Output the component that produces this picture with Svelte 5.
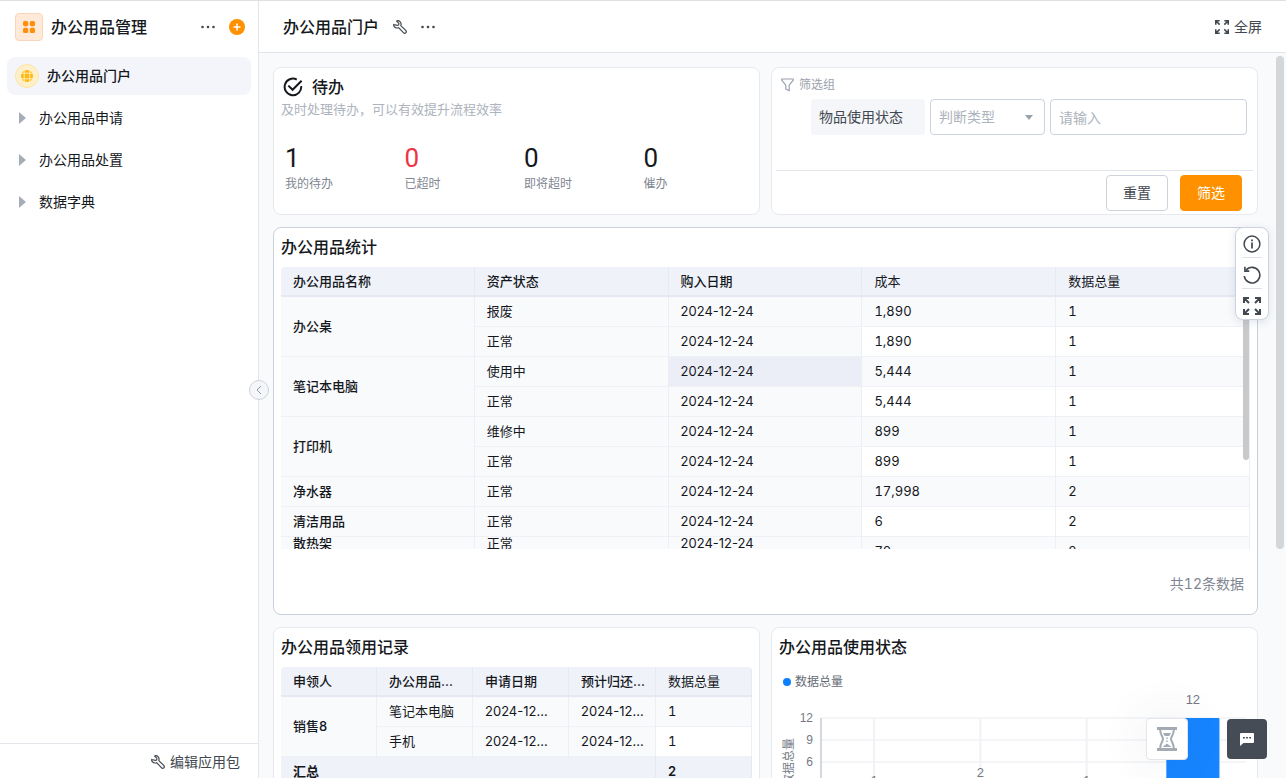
<script>
	let menus = ['办公用品申请', '办公用品处置', '数据字典'];

	let stats = [
		{ label: '我的待办', value: 1 },
		{ label: '已超时', value: 0, danger: true },
		{ label: '即将超时', value: 0 },
		{ label: '催办', value: 0 }
	];

	let keyword = $state('');
	let judge = $state('');

	// span = how many rows the name cell covers, 0 when a cell above covers it
	let rows = [
		{ name: '办公桌', span: 2, state: '报废', date: '2024-12-24', cost: '1,890', total: 1 },
		{ span: 0, state: '正常', date: '2024-12-24', cost: '1,890', total: 1 },
		{ name: '笔记本电脑', span: 2, state: '使用中', date: '2024-12-24', cost: '5,444', total: 1, active: true },
		{ span: 0, state: '正常', date: '2024-12-24', cost: '5,444', total: 1 },
		{ name: '打印机', span: 2, state: '维修中', date: '2024-12-24', cost: '899', total: 1 },
		{ span: 0, state: '正常', date: '2024-12-24', cost: '899', total: 1 },
		{ name: '净水器', span: 1, state: '正常', date: '2024-12-24', cost: '17,998', total: 2 },
		{ name: '清洁用品', span: 1, state: '正常', date: '2024-12-24', cost: '6', total: 2 },
		{ name: '散热架', span: 1, state: '正常', date: '2024-12-24', cost: '70', total: 2, stuck: true }
	];

	// chart
	let chartWidth = $state(471);
	const left = 42;
	const top = 21;
	const unit = 22;
	const values = [1, 2, 1, 12];
	const ticks = [12, 9, 6, 3, 0];
	let step = $derived((chartWidth - left - 4) / values.length);
	const barTop = (v) => top + ((12 - v) / 3) * unit;
</script>

{#snippet wrench()}
	<svg width="14" height="14" viewBox="0 0 14 14" fill="none" stroke="#42484f" stroke-width="1.2" stroke-linejoin="round" stroke-linecap="round">
		<path d="M3.6 1.1 5.9 3.4 5.7 5 4.2 5.4 1 4.5C.4 4.3.5 5.5 1.3 6.6 2.2 7.8 3.9 8.3 5.6 7.7L10.4 12.7C11.1 13.4 12.2 13.4 12.8 12.8 13.4 12.2 13.4 11.1 12.7 10.4L7.8 5.6C8.4 3.7 7.8 2.1 6.6 1.2 5.5.5 4.3.4 3.6 1.1Z" />
	</svg>
{/snippet}

{#snippet dots()}
	<svg width="14" height="4" viewBox="0 0 14 4" fill="#42484f">
		<circle cx="1.5" cy="2" r="1.3" /><circle cx="7" cy="2" r="1.3" /><circle cx="12.5" cy="2" r="1.3" />
	</svg>
{/snippet}

{#snippet expand(size)}
	<svg width={size} height={size} viewBox="0 0 18 18" fill="none" stroke="#42484f" stroke-width="2">
		<path d="M1 6V1H6M1 1 6 6M12 1H17V6M17 1 12 6M1 12V17H6M1 17 6 12M12 17H17V12M17 17 12 12" />
	</svg>
{/snippet}

<div class="page">
	<aside>
		<div class="app-head">
			<span class="app-icon">
				<svg width="12" height="12" viewBox="0 0 12 12" fill="#ff8f0a">
					<rect width="5.2" height="5.2" rx="1.6" /><rect x="6.8" width="5.2" height="5.2" rx="1.6" />
					<rect y="6.8" width="5.2" height="5.2" rx="1.6" /><rect x="6.8" y="6.8" width="5.2" height="5.2" rx="1.6" />
				</svg>
			</span>
			<h1>办公用品管理</h1>
			<button class="plain more" aria-label="更多">{@render dots()}</button>
			<button class="plain" aria-label="新建">
				<svg width="16" height="16" viewBox="0 0 16 16">
					<circle cx="8" cy="8" r="8" fill="#ff9100" />
					<path d="M8 4.5V11.5M4.5 8H11.5" stroke="#fff" stroke-width="1.5" />
				</svg>
			</button>
		</div>
		<nav>
			<a class="menu current" href="#portal">
				<span class="globe">
					<svg width="12" height="12" viewBox="0 0 12 12">
						<circle cx="6" cy="6" r="6" fill="#fcb813" />
						<g fill="none" stroke="#fff0bf" stroke-width=".9">
							<path d="M3.2 0V12M8.8 0V12M0 3.2H12M0 8.8H12" />
						</g>
					</svg>
				</span>
				办公用品门户
			</a>
			{#each menus as menu}
				<a class="menu" href="#menu">
					<svg width="7" height="12" viewBox="0 0 7 12"><path d="M0 0 7 6 0 12Z" fill="#a5adb7" /></svg>
					{menu}
				</a>
			{/each}
		</nav>
		<button class="plain edit">{@render wrench()}编辑应用包</button>
		<button class="fold" aria-label="收起">
			<svg width="6" height="10" viewBox="0 0 6 10" fill="none" stroke="#8f97a3"><path d="M5 1 1 5 5 9" /></svg>
		</button>
	</aside>

	<main>
		<header>
			<h1>办公用品门户</h1>
			<button class="plain" aria-label="设置">{@render wrench()}</button>
			<button class="plain" aria-label="更多">{@render dots()}</button>
			<button class="plain full">{@render expand(14)}全屏</button>
		</header>

		<div class="content">
			<section class="card todo">
				<h2>
					<svg width="20" height="20" viewBox="0 0 20 20" fill="none" stroke="#15181c" stroke-width="2">
						<path d="M13.8 2.6A8.3 8.3 0 1 0 18.2 9.2" />
						<path d="M5.3 8.6 9.6 12.8 18.6 3.8" />
					</svg>
					待办
				</h2>
				<p>及时处理待办，可以有效提升流程效率</p>
				<div class="stats">
					{#each stats as s}
						<div>
							<strong class:danger={s.danger}>{s.value}</strong>
							<span>{s.label}</span>
						</div>
					{/each}
				</div>
			</section>

			<section class="card filter">
				<div class="filter-head">
					<svg width="13" height="14" viewBox="0 0 13 14" fill="none" stroke="#9aa2ad" stroke-width="1.2" stroke-linejoin="round">
						<path d="M.7 1H12.3V2.2L8.2 7.2V12.8L4.8 11V7.2L.7 2.2Z" />
					</svg>
					筛选组
				</div>
				<div class="filter-row">
					<label for="keyword">物品使用状态</label>
					<div class="select">
						<select aria-label="判断类型" bind:value={judge}>
							<option value="">判断类型</option>
							<option value="eq">等于</option>
						</select>
					</div>
					<input id="keyword" type="text" placeholder="请输入" bind:value={keyword} />
				</div>
				<div class="filter-foot">
					<button onclick={() => { keyword = ''; judge = '' }}>重置</button>
					<button class="primary">筛选</button>
				</div>
			</section>

			<section class="card wide">
				<h2>办公用品统计</h2>
				<div class="table-box">
					<table>
						<thead>
							<tr>
								<th>办公用品名称</th>
								<th>资产状态</th>
								<th>购入日期</th>
								<th class="num">成本</th>
								<th class="num">数据总量</th>
							</tr>
						</thead>
						<tbody>
							{#each rows as r}
								<tr class:stuck={r.stuck}>
									{#if r.span}
										<th rowspan={r.span}>{r.name}</th>
									{/if}
									<td>{r.state}</td>
									<td class:active={r.active}>{r.date}</td>
									<td class="num">{r.cost}</td>
									<td class="num">{r.total}</td>
								</tr>
							{/each}
						</tbody>
					</table>
					<div class="inner-bar"></div>
				</div>
				<div class="count">共12条数据</div>
				<div class="tools">
					<button class="plain" aria-label="说明">
						<svg width="18" height="18" viewBox="0 0 18 18" fill="none" stroke="#42484f" stroke-width="1.5">
							<circle cx="9" cy="9" r="7.9" /><path d="M9 7.6V13.4M9 4.4V6.2" stroke-width="1.7" />
						</svg>
					</button>
					<button class="plain" aria-label="刷新">
						<svg width="18" height="18" viewBox="0 0 18 18" fill="none" stroke="#42484f" stroke-width="1.6">
							<path d="M1.3 10A7.8 7.8 0 1 0 3 4.2" /><path d="M1.9.8V5.1H6.3" />
						</svg>
					</button>
					<button class="plain" aria-label="放大">{@render expand(18)}</button>
				</div>
			</section>

			<section class="card">
				<h2>办公用品领用记录</h2>
				<table>
					<colgroup><col /><col /><col /><col class="narrow" /><col /></colgroup>
					<thead>
						<tr>
							<th>申领人</th>
							<th>办公用品...</th>
							<th>申请日期</th>
							<th>预计归还...</th>
							<th class="num">数据总量</th>
						</tr>
					</thead>
					<tbody>
						<tr>
							<th rowspan="2">销售8</th>
							<td>笔记本电脑</td>
							<td>2024-12...</td>
							<td>2024-12...</td>
							<td class="num">1</td>
						</tr>
						<tr>
							<td>手机</td>
							<td>2024-12...</td>
							<td>2024-12...</td>
							<td class="num">1</td>
						</tr>
					</tbody>
					<tfoot>
						<tr>
							<th colspan="4">汇总</th>
							<th>2</th>
						</tr>
					</tfoot>
				</table>
			</section>

			<section class="card">
				<h2>办公用品使用状态</h2>
				<div class="legend"><i></i>数据总量</div>
				<div bind:clientWidth={chartWidth}>
					<svg class="chart" width={chartWidth} height="130">
						{#each ticks as t}
							<line x1={left} x2={chartWidth - 4} y1={barTop(t)} y2={barTop(t)} />
							<text x={left - 8} y={barTop(t) + 4} text-anchor="end">{t}</text>
						{/each}
						{#each values as v, i}
							<line class="upright" x1={left + step * (i + 0.5)} x2={left + step * (i + 0.5)} y1={top} y2="130" />
							<rect x={left + step * (i + 0.25)} y={barTop(v)} width={step / 2} height={130 - barTop(v)} rx="1" />
							<text class="value" x={left + step * (i + 0.5)} y={barTop(v) - 14} text-anchor="middle">{v}</text>
						{/each}
						<line class="axis" x1={left} x2={left} y1={top} y2="130" />
						<text transform="translate(14 65) rotate(-90)" text-anchor="middle">数据总量</text>
					</svg>
				</div>
			</section>
		</div>
		<div class="page-bar"></div>
	</main>

	<button class="float wait" aria-label="等待">
		<svg width="20" height="24" viewBox="0 0 20 24" fill="none" stroke="#a3abb4">
			<path d="M0 1.5H20M0 22.5H20" stroke-width="3" />
			<path d="M3.2 3C3.2 8 6 9.5 6 12S3.2 16 3.2 21M16.8 3C16.8 8 14 9.5 14 12S16.8 16 16.8 21" stroke-width="2" />
			<path d="M6 6H14L12.2 9H7.8ZM10 16.5 14.5 20H5.5Z" fill="#a3abb4" stroke="none" />
			<path d="M10 10.5V12M10 13.5V15" stroke-width="1.5" />
		</svg>
	</button>
	<button class="float chat" aria-label="客服">
		<svg width="14" height="13" viewBox="0 0 14 13">
			<path d="M1 0H13Q14 0 14 1V9Q14 10 13 10H3.5L0 13V1Q0 0 1 0Z" fill="#fff" />
			<path d="M3 4.8H4.8M6.1 4.8H7.9M9.2 4.8H11" stroke="#464c56" stroke-width="1.4" />
		</svg>
	</button>
</div>

<style>
	:global(body) {
		margin: 0;
		font-family: Inter, "Noto Sans CJK SC", sans-serif;
		font-size: 14px;
		line-height: 20px;
		color: #15181c;
	}

	* {
		box-sizing: border-box;
	}

	h1, h2, p {
		margin: 0;
	}

	h1, h2 {
		font-size: 16px;
		font-weight: 500;
	}

	button, input, select {
		font: inherit;
		color: inherit;
	}

	svg {
		display: block;
		flex: none;
	}

	.plain {
		display: flex;
		align-items: center;
		padding: 0;
		border: 0;
		background: none;
		color: #42484f;
	}

	.page {
		display: flex;
		height: 100vh;
		overflow: hidden;
		border-top: 1px solid #dfe0e1;
	}

	/* sidebar */
	aside {
		position: relative;
		display: flex;
		flex: none;
		flex-direction: column;
		width: 259px;
		border-right: 1px solid #e2e6eb;
		background: #fff;
	}

	.app-head {
		display: flex;
		align-items: center;
		height: 52px;
		margin-bottom: 4px;
		padding: 0 13px 0 15px;
	}

	.app-head h1 {
		margin-left: 8px;
	}

	.more {
		margin: 0 14px 0 auto;
	}

	.app-icon {
		display: flex;
		align-items: center;
		justify-content: center;
		width: 28px;
		height: 28px;
		border: 1px solid #fbd5b8;
		border-radius: 4px;
		background: #ffe9d9;
	}

	nav {
		display: flex;
		flex: 1;
		flex-direction: column;
		gap: 4px;
		padding: 0 7px;
	}

	.menu {
		display: flex;
		align-items: center;
		gap: 13px;
		height: 38px;
		padding-left: 12px;
		border-radius: 8px;
		color: #15181c;
		text-decoration: none;
	}

	.current {
		gap: 8px;
		padding-left: 8px;
		background: #f4f5fa;
		font-weight: 500;
	}

	.globe {
		display: flex;
		align-items: center;
		justify-content: center;
		width: 24px;
		height: 24px;
		border: 1px solid #fde4a0;
		border-radius: 50%;
		background: #fff0cb;
	}

	.edit {
		justify-content: flex-end;
		gap: 5px;
		height: 35px;
		padding: 2px 18px 0 0;
		border-top: 1px solid #e2e6eb;
	}

	.fold {
		position: absolute;
		top: 50%;
		right: -11px;
		z-index: 1;
		display: flex;
		align-items: center;
		justify-content: center;
		width: 20px;
		height: 20px;
		margin-top: -10px;
		padding: 0;
		border: 1px solid #cdd3dc;
		border-radius: 50%;
		background: #f4f6fa;
	}

	/* main */
	main {
		position: relative;
		display: flex;
		flex: 1;
		flex-direction: column;
		min-width: 0;
		background: #f9fafc;
	}

	header {
		display: flex;
		flex: none;
		align-items: center;
		gap: 14px;
		height: 52px;
		padding: 1px 24px 0;
		border-bottom: 1px solid #e2e6eb;
		background: #fff;
	}

	.full {
		gap: 5px;
		margin-left: auto;
	}

	.content {
		display: grid;
		grid-template-columns: repeat(2, minmax(0, 1fr));
		grid-template-rows: auto auto 400px;
		gap: 12px 11px;
		padding: 14px 28px 14px 14px;
		overflow: hidden;
	}

	.card {
		position: relative;
		padding: 0 7px;
		border: 1px solid #e6eaef;
		border-radius: 8px;
		background: #fff;
	}

	.card h2 {
		height: 39px;
		line-height: 38px;
	}

	.card.todo {
		padding: 7px 0 0 7px;
	}

	.todo h2 {
		display: flex;
		align-items: center;
		gap: 9px;
		height: 24px;
		padding-left: 2px;
		line-height: 24px;
	}

	.todo p {
		color: #adb3bc;
		font-size: 13px;
	}

	.stats {
		display: grid;
		grid-template-columns: repeat(4, 1fr);
		margin-top: 23px;
		padding-bottom: 19px;
	}

	.stats div {
		display: flex;
		flex-direction: column;
		padding-left: 4px;
	}

	.stats strong {
		font-family: Roboto, sans-serif;
		font-size: 26px;
		font-weight: 400;
		line-height: 32px;
	}

	.stats .danger {
		color: #ee3344;
	}

	.stats span {
		color: #7f8792;
		font-size: 12px;
	}

	/* filter */
	.card.filter {
		padding: 7px 4px 3px;
	}

	.filter-head {
		display: flex;
		align-items: center;
		gap: 5px;
		margin-bottom: 4px;
		padding-left: 5px;
		color: #9aa2ad;
		font-size: 12px;
	}

	.filter-row {
		display: flex;
		gap: 5px;
		padding: 0 6px 35px 35px;
	}

	.filter-row label {
		width: 114px;
		padding-left: 8px;
		border-radius: 4px;
		background: #f4f6fa;
		color: #42484f;
		line-height: 36px;
	}

	.select {
		position: relative;
		width: 115px;
	}

	.select::after {
		content: "";
		position: absolute;
		top: 16px;
		right: 12px;
		border: 4px solid transparent;
		border-top: 5px solid #9aa2ad;
		border-bottom: 0;
		pointer-events: none;
	}

	.filter-row select, .filter-row input {
		width: 100%;
		height: 36px;
		padding: 0 8px;
		border: 1px solid #cdd3dc;
		border-radius: 4px;
		background: #fff;
		appearance: none;
	}

	.filter-row select {
		color: #adb3bc;
	}

	.filter-row input {
		flex: 1;
		min-width: 0;
	}

	.filter-row input::placeholder {
		color: #adb3bc;
	}

	.filter-foot {
		display: flex;
		justify-content: flex-end;
		gap: 12px;
		padding: 4px 11px 0 0;
		border-top: 1px solid #e2e6eb;
	}

	.filter-foot button {
		width: 62px;
		height: 36px;
		padding: 0;
		border: 1px solid #cdd3dc;
		border-radius: 4px;
		background: #fff;
		color: #42484f;
	}

	.filter-foot .primary {
		border-color: #ff9100;
		background: #ff9100;
		color: #fff;
	}

	/* tables */
	.wide {
		grid-column: 1 / -1;
		border-color: #c9d0dc;
	}

	.table-box {
		position: relative;
		height: 282px;
		overflow: hidden;
	}

	table {
		width: 100%;
		table-layout: fixed;
		border-spacing: 0;
		border-radius: 4px 4px 0 0;
		overflow: hidden;
		font-size: 13px;
	}

	th, td {
		height: 30px;
		padding: 0 0 1px 12px;
		border-right: 1px solid #eceff5;
		border-bottom: 1px solid #eff1f6;
		background: #f9fafc;
		font-weight: 400;
		text-align: left;
		white-space: nowrap;
	}

	tbody th {
		font-weight: 500;
	}

	thead th {
		padding-bottom: 0;
		border-right-color: #e6eaf3;
		border-bottom: 2px solid #e5e8f1;
		background: #eff2f9;
		font-weight: 500;
	}

	thead .num {
		font-weight: 400;
	}

	tfoot th {
		border-color: #e5e8f1;
		background: #eff2f9;
		font-weight: 600;
	}

	.num, .count {
		font-variant-numeric: tabular-nums;
	}

	tbody tr:nth-child(even) .num {
		background: #fff;
	}

	.active {
		background: #ebeef6;
	}

	/* the headings of a cut row stay inside what can be seen of it */
	.stuck th, .stuck td:not(.num) {
		line-height: 12px;
		vertical-align: top;
	}

	.narrow {
		width: 87px;
	}

	.inner-bar {
		position: absolute;
		top: 30px;
		right: 1px;
		width: 6px;
		height: 163px;
		border-radius: 3px;
		background: #c8c9cb;
	}

	.count {
		padding: 25px 6px 20px;
		color: #7f8792;
		text-align: right;
	}

	.tools {
		position: absolute;
		top: -1px;
		right: -12px;
		width: 34px;
		padding: 2px 6px 0;
		border: 1px solid #cdd3dc;
		border-radius: 8px;
		background: #fff;
		box-shadow: 0 2px 8px rgba(60, 80, 130, 0.15);
	}

	.tools button {
		justify-content: center;
		width: 20px;
		height: 27px;
	}

	.tools button + button {
		height: 31px;
		padding-top: 4px;
		border-top: 1px solid #dfe3ea;
	}

	/* chart */
	.legend {
		display: flex;
		align-items: center;
		gap: 4px;
		height: 30px;
		padding-left: 4px;
		color: #666c76;
		font-size: 12px;
	}

	.legend i {
		width: 8px;
		height: 8px;
		border-radius: 50%;
		background: #0c80ff;
	}

	.chart {
		overflow: visible;
	}

	.chart line {
		stroke: #e9ecf1;
	}

	.chart .upright {
		stroke: #f0f2f5;
		stroke-width: 2;
	}

	.chart .axis {
		stroke: #d3d7de;
		stroke-width: 2;
	}

	.chart rect {
		fill: #1685ff;
	}

	.chart text {
		fill: #747a84;
		font-family: "Liberation Sans", "Noto Sans CJK SC", sans-serif;
		font-size: 12px;
	}

	.chart .value {
		font-size: 13px;
	}

	.page-bar {
		position: absolute;
		top: 55px;
		right: 2px;
		width: 8px;
		height: 493px;
		border-radius: 4px;
		background: #d4d7da;
	}

	.float {
		position: fixed;
		display: flex;
		align-items: center;
		justify-content: center;
		padding: 0;
		border-radius: 4px;
	}

	.wait {
		right: 98px;
		bottom: 18px;
		width: 42px;
		height: 42px;
		border: 1px solid #e2e6eb;
		background: #fff;
		box-shadow: 0 0 48px rgba(60, 70, 90, 0.1);
	}

	.chat {
		right: 19px;
		bottom: 19px;
		width: 40px;
		height: 40px;
		border: 0;
		background: #464c56;
	}
</style>
